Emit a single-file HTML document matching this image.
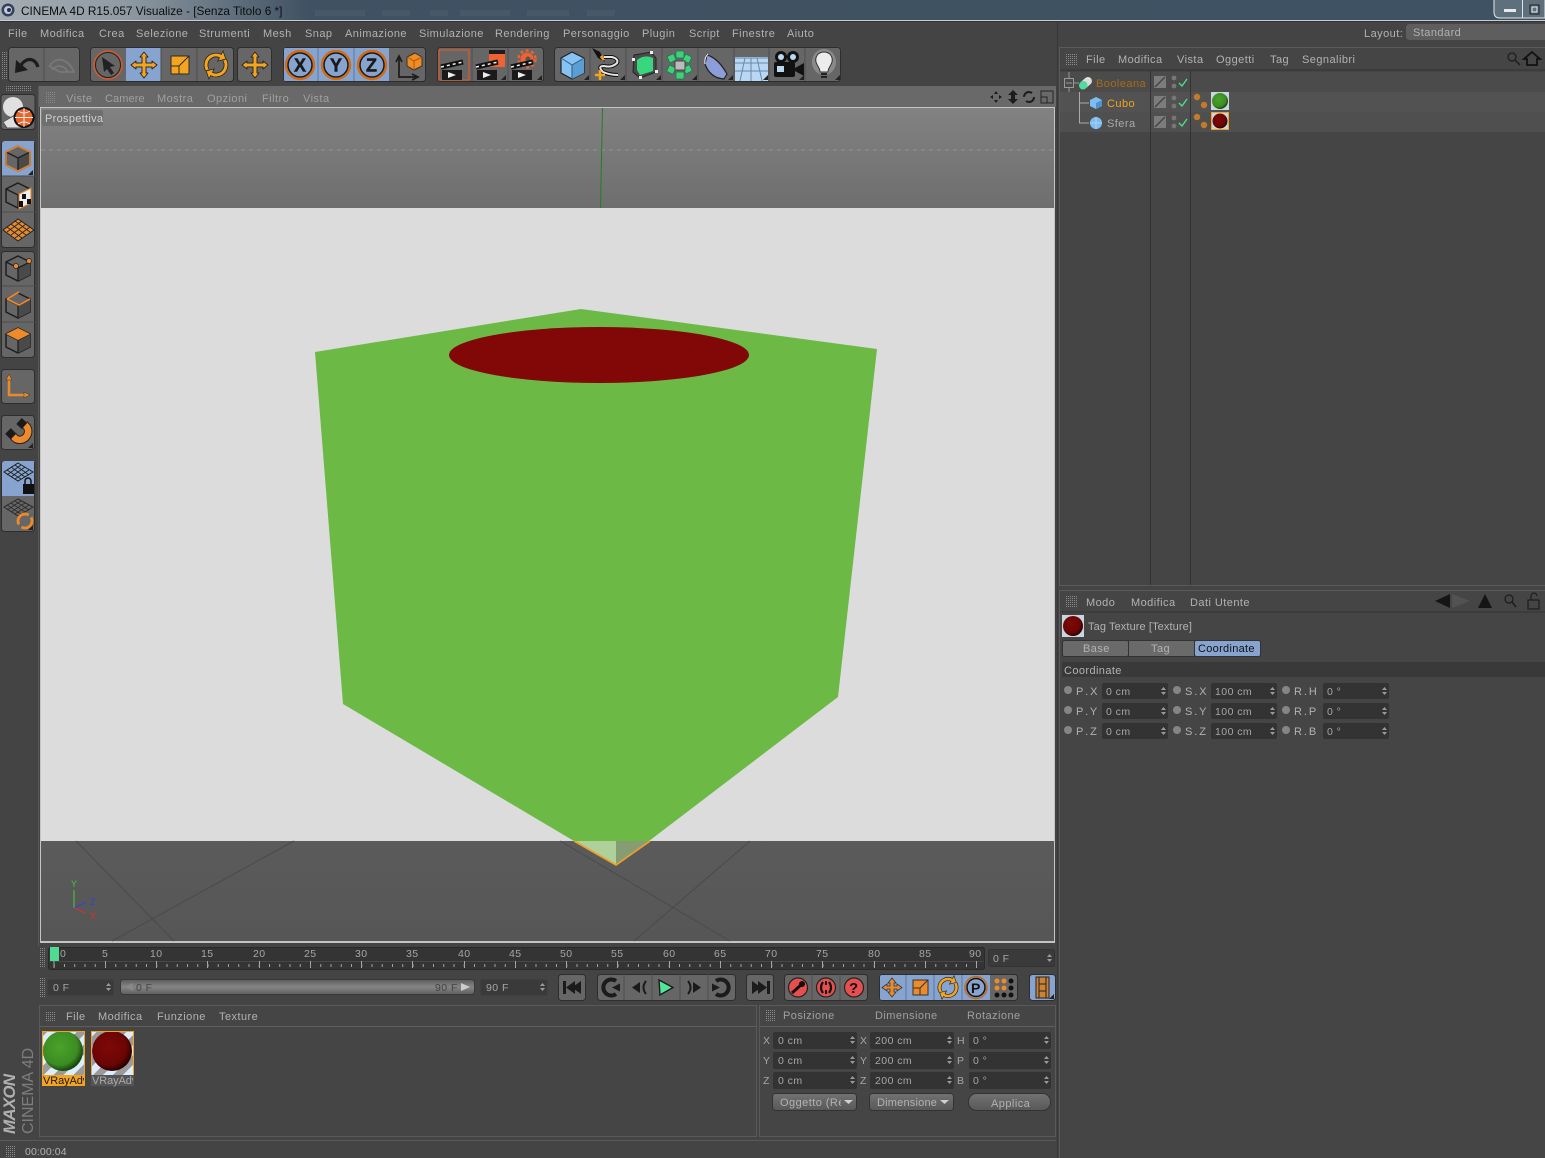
<!DOCTYPE html>
<html><head><meta charset="utf-8"><title>CINEMA 4D</title>
<style>
html,body{margin:0;padding:0;background:#444;overflow:hidden}
svg{display:block}
text{font-family:"Liberation Sans",sans-serif;font-size:11px;letter-spacing:.45px;fill:#b2b2b2}
.d{fill:#a0a0a0}
.f{fill:#a6a6a6;font-size:10.5px}
.l{word-spacing:-2px}
.btn{fill:#666;stroke:#2e2e2e}
.sep{stroke:#4d4d4d}
.ic{fill:none;stroke:#1e1e1e;stroke-width:2;stroke-linejoin:round}
.o{fill:#f5a41f;stroke:#2a2a2a;stroke-width:1;stroke-linejoin:round}
.xyz{font-size:18px;font-weight:700;fill:#1a1a1a;letter-spacing:0;stroke:#1a1a1a;stroke-width:.5px}
</style></head><body>
<svg width="1545" height="1158" viewBox="0 0 1545 1158" xmlns="http://www.w3.org/2000/svg">
<defs>
<pattern id="grip" width="2" height="2" patternUnits="userSpaceOnUse"><rect width="1" height="1" fill="#8a8a8a"/></pattern>
<linearGradient id="title" x1="0" x2="1" y1="0" y2="0"><stop offset="0" stop-color="#a5adb3"/><stop offset=".08" stop-color="#8f9aa3"/><stop offset=".2" stop-color="#3f5162"/><stop offset="1" stop-color="#3f5263"/></linearGradient>
<linearGradient id="top" x1="0" x2="0" y1="0" y2="1"><stop offset="0" stop-color="#828282"/><stop offset="1" stop-color="#6e6e6e"/></linearGradient>
<linearGradient id="bot" x1="0" x2="0" y1="0" y2="1"><stop offset="0" stop-color="#5b5b5b"/><stop offset="1" stop-color="#565656"/></linearGradient>
<linearGradient id="sl" x1="0" x2="0" y1="0" y2="1"><stop offset="0" stop-color="#5c5c5c"/><stop offset=".5" stop-color="#858585"/><stop offset="1" stop-color="#5e5e5e"/></linearGradient>
<linearGradient id="bt" x1="0" x2="0" y1="0" y2="1"><stop offset="0" stop-color="#727272"/><stop offset="1" stop-color="#585858"/></linearGradient>
<radialGradient id="gs" cx=".42" cy=".4" r=".62"><stop offset="0" stop-color="#4aa32b"/><stop offset=".72" stop-color="#3c8c22"/><stop offset="1" stop-color="#123d0a"/></radialGradient>
<radialGradient id="rs" cx=".42" cy=".4" r=".62"><stop offset="0" stop-color="#7f0808"/><stop offset=".72" stop-color="#6b0505"/><stop offset="1" stop-color="#220000"/></radialGradient>
<pattern id="mat" width="14" height="14" patternUnits="userSpaceOnUse" patternTransform="rotate(45)"><rect width="14" height="14" fill="#dcecf8"/><rect width="7" height="14" fill="#9a9a9a"/></pattern>
<symbol id="spin" width="6" height="10" overflow="visible"><path d="M0 4 L2.5 1 L5 4Z M0 6 L2.5 9 L5 6Z" fill="#9a9a9a"/></symbol>
<symbol id="move" width="34" height="34" overflow="visible"><path d="M17 4 L21 9 H19 V15 H25 V13 L30 17 L25 21 V19 H19 V25 H21 L17 30 L13 25 H15 V19 H9 V21 L4 17 L9 13 V15 H15 V9 H13Z" class="o"/></symbol>
<symbol id="cube" width="34" height="34" overflow="visible"><path d="M17 5 L29 11 V24 L17 30 L5 24 V11Z" fill="#666" stroke="#1f1f1f" stroke-width="1.5"/><path d="M17 17 L29 11 V24 L17 30Z" fill="#4a4a4a"/><path d="M5 11 L17 17 L29 11 M17 17 V30" fill="none" stroke="#1f1f1f" stroke-width="1.3"/></symbol>
<symbol id="corner" width="6" height="6"><path d="M5 0 V5 H0Z" fill="#222"/></symbol>
<symbol id="axis" width="34" height="34" overflow="visible"><circle cx="17" cy="17" r="14" fill="none" stroke="#d46b16" stroke-width="2.4"/><circle cx="17" cy="17" r="12" fill="none" stroke="#1a1a1a" stroke-width="1.5"/></symbol>
<symbol id="tagdots" width="16" height="16" overflow="visible"><circle cx="4" cy="4" r="3.2" fill="#c47a2a"/><circle cx="11" cy="12" r="3.2" fill="#c47a2a"/></symbol>
<symbol id="vis" width="40" height="20" overflow="visible"><rect x="0" y="3" width="12" height="12" fill="#7c7c7c"/><path d="M1 14 L11 4" stroke="#444" stroke-width="1.4"/><circle cx="20" cy="5" r="2.4" fill="#777"/><circle cx="20" cy="13" r="2.4" fill="#777"/><path d="M25 10 L28 13 L33 6" fill="none" stroke="#4fe08e" stroke-width="1.3"/></symbol>
<g id="rot"><circle r="10" fill="none" stroke="#222" stroke-width="4.6" stroke-dasharray="26 5.4" transform="rotate(-30)"/><path d="M2.500 -4.500 L7 -13 L9.300 -6.200Z M-2.500 4.500 L-7 13 L-9.300 6.200Z" fill="#222" stroke="#222" stroke-width="1.500"/><circle r="10" fill="none" stroke="#f5a41f" stroke-width="3" stroke-dasharray="26 5.4" transform="rotate(-30)"/><path d="M2.500 -4.500 L7 -13 L9.300 -6.200Z M-2.500 4.500 L-7 13 L-9.300 6.200Z" fill="#f5a41f"/></g>
</defs>

<rect width="1545" height="1158" fill="#444"/>

<!-- title -->
<rect width="1545" height="20" fill="url(#title)"/>
<rect y="20" width="1545" height="1" fill="#c9ced2"/>
<rect x="0" y="21" width="1545" height="1" fill="#333"/>
<g fill="#475969"><rect x="315" y="10" width="50" height="6"/><rect x="382" y="10" width="28" height="6"/><rect x="430" y="10" width="18" height="6"/><rect x="460" y="10" width="50" height="6"/><rect x="527" y="10" width="42" height="6"/><rect x="587" y="10" width="28" height="6"/></g>
<circle cx="8" cy="10" r="6.5" fill="#33405e"/><circle cx="8" cy="10" r="4" fill="#c2c9d8"/><circle cx="9" cy="10" r="2" fill="#27304a"/>
<text x="21" y="15" style="font-size:11.8px;letter-spacing:0;fill:#0d0d0d">CINEMA 4D R15.057 Visualize - [Senza Titolo 6 *]</text>
<path d="M1494 0 V12 Q1494 18 1500 18 H1545 V0" fill="#5f707d" stroke="#e2e6ea"/>
<rect x="1522" y="0" width="1" height="18" fill="#dfe4e8"/>
<rect x="1504" y="9" width="12" height="3" fill="#e6e9ec"/>
<rect x="1530" y="5" width="9" height="9" fill="none" stroke="#222"/><rect x="1532" y="7" width="5" height="5" fill="none" stroke="#e6e9ec"/>

<!-- menu -->
<text x="8" y="37">File</text><text x="40" y="37">Modifica</text><text x="99" y="37">Crea</text><text x="136" y="37">Selezione</text><text x="199" y="37">Strumenti</text><text x="263" y="37">Mesh</text><text x="305" y="37">Snap</text><text x="345" y="37">Animazione</text><text x="419" y="37">Simulazione</text><text x="495" y="37">Rendering</text><text x="563" y="37">Personaggio</text><text x="642" y="37">Plugin</text><text x="689" y="37">Script</text><text x="732" y="37">Finestre</text><text x="787" y="37">Aiuto</text>
<text x="1364" y="37">Layout:</text>
<path d="M1545 24 H1410 Q1406 24 1406 28 V36 Q1406 40 1410 40 H1545Z" fill="#5e5e5e"/>
<text x="1413" y="36">Standard</text>

<!-- top toolbar -->
<rect x="2" y="52" width="5" height="28" fill="url(#grip)"/>
<rect x="8.500" y="47.500" width="71" height="34" rx="3" class="btn"/><path d="M44 48 V81" class="sep"/>
<path d="M15 73 L16 60 L28 70Z" fill="#1c1c1c"/><path d="M20 67 C25 57 35 57 38 67" fill="none" stroke="#1c1c1c" stroke-width="3.200"/>
<path d="M50 66 C55 56 68 58 74 72 L60 72 L49 66 M52 70 C57 64 64 65 68 72" fill="none" stroke="#7b7b7b" stroke-width="1.5"/>

<rect x="90.500" y="47.500" width="143" height="34" rx="3" class="btn"/>
<rect x="126" y="48" width="35" height="33" fill="#86a4cf"/>
<path d="M161 48 V81 M197 48 V81" class="sep"/>
<circle cx="108" cy="65" r="14" fill="none" stroke="#d8582a" stroke-width="1.5"/><circle cx="108" cy="65" r="12.5" fill="none" stroke="#222" stroke-width="1"/>
<path d="M102 57 L115 66 L110 67 L114 73 L111 75 L107 69 L104 72Z" fill="#222"/>
<use href="#move" x="127" y="48"/>
<rect x="171" y="56" width="18" height="18" class="o"/><path d="M171 66 H179 V74 M179 66 L189 56" fill="none" stroke="#2a2a2a"/>
<use href="#rot" x="216" y="65"/>
<rect x="237.500" y="47.500" width="34" height="34" rx="3" class="btn"/><use href="#move" x="238" y="48"/>

<rect x="283.500" y="47.500" width="142" height="34" rx="3" class="btn"/>
<path d="M285 48 H389 V81 H285 Q284 81 284 79 V50 Q284 48 285 48Z" fill="#86a4cf"/>
<path d="M318 48 V81 M354 48 V81" stroke="#5f7896"/>
<use href="#axis" x="283" y="48"/><use href="#axis" x="319" y="48"/><use href="#axis" x="355" y="48"/>
<text x="294" y="71.500" class="xyz">X</text><text x="330" y="71.500" class="xyz">Y</text><text x="366" y="71.500" class="xyz">Z</text>
<path d="M399 58 V77 H416 M396 62 L399 56 L402 62 M412 74 L418 77 L412 80" fill="none" stroke="#1c1c1c" stroke-width="1.7"/>
<path d="M407 57 L415 53 L422 57 V66 L414 70 L407 66Z" fill="#f08c20" stroke="#333"/><path d="M407 57 L414 61 L422 57 M414 61 V70" fill="none" stroke="#a85a10"/>

<!-- render -->
<rect x="437.500" y="47.500" width="106" height="34" rx="3" class="btn"/><path d="M472 48 V81 M508 48 V81" class="sep"/>
<rect x="439" y="50" width="30" height="30" fill="none" stroke="#d75a2a" stroke-width="1.2"/>
<rect x="489" y="50" width="16" height="17" rx="1" fill="#ef6232"/><rect x="489" y="50" width="16" height="4" fill="#1d1d1d"/>
<circle cx="527" cy="59" r="6.500" fill="#ef6232"/><circle cx="527" cy="59" r="8.500" fill="none" stroke="#ef6232" stroke-width="2.500" stroke-dasharray="3 2.500"/><circle cx="528" cy="59" r="2.500" fill="#555"/>
<g id="c1"><path d="M441 67 L463 62" stroke="#111" stroke-width="5"/><path d="M441 67 L463 62" stroke="#eee" stroke-width="1.500" stroke-dasharray="3 3"/><rect x="442" y="70" width="20" height="10" fill="#1a1a1a"/><path d="M448 72 L456 75 L448 78Z" fill="#eee"/></g>
<use href="#c1" x="35"/><use href="#c1" x="70"/>
<use href="#corner" x="501" y="75"/><use href="#corner" x="537" y="75"/>

<!-- create icons -->
<rect x="554.500" y="47.500" width="286" height="34" rx="3" class="btn"/>
<path d="M590 48 V81 M626 48 V81 M662 48 V81 M698 48 V81 M734 48 V81 M769 48 V81 M805 48 V81" class="sep"/>
<path d="M572 52 L584 58 V73 L572 79 L561 73 V58Z" fill="#87c2f3" stroke="#222" stroke-width="1.2"/><path d="M572 65 L584 58 V73 L572 79Z" fill="#5b9ed3"/><path d="M561 58 L572 65 L584 58 M572 65 V79" fill="none" stroke="#2f5f86"/>
<path d="M592 48 L600 52 L605 62 L598 58Z" fill="#111"/><path d="M601 56 L604 60" stroke="#f39a1f" stroke-width="3"/>
<path d="M604 57 H612 Q619 59 617 63 Q612 68 604 66 Q597 66 603 72 Q610 75 618 75" fill="none" stroke="#111" stroke-width="4"/><path d="M604 57 H612 Q619 59 617 63 Q612 68 604 66 Q597 66 603 72 Q610 75 618 75" fill="none" stroke="#e5e5e5" stroke-width="2"/>
<path d="M600 70 V80 M595 75 H605" stroke="#f5a41f" stroke-width="2.500"/>
<path d="M634 55 L651 52 L656 58 V72 L640 78 L633 72Z" fill="#4a4a4a" stroke="#222"/><path d="M637 60 Q645 54 653 58 L653 71 L640 75 L637 70Z" fill="#38d67f"/><g fill="#eee"><rect x="650" y="51" width="3" height="3"/><rect x="655" y="70" width="3" height="3"/><rect x="639" y="76" width="3" height="3"/><rect x="632" y="58" width="3" height="3"/></g>
<g fill="#43cf76" stroke="#175" stroke-width=".7"><rect x="676" y="51" width="8" height="7" rx="1"/><rect x="684" y="55" width="7" height="7" rx="1" transform="rotate(25 687 58)"/><rect x="684" y="66" width="7" height="7" rx="1" transform="rotate(-25 687 69)"/><rect x="676" y="72" width="8" height="7" rx="1"/><rect x="668" y="66" width="7" height="7" rx="1" transform="rotate(25 671 69)"/><rect x="668" y="55" width="7" height="7" rx="1" transform="rotate(-25 671 58)"/></g><rect x="675" y="61" width="10" height="9" fill="#bbb" stroke="#444"/>
<path d="M707 55 Q718 58 727 74 L724 79 Q710 78 705 64 Z" fill="#8c9ed8" stroke="#222" stroke-width="1.2"/><path d="M708 54 Q704 58 705 64" fill="none" stroke="#eef"/>
<rect x="735" y="57" width="33" height="24" fill="#b9d7f4"/><path d="M735 58 H768 M735 63 H768 M735 71 H768 M745 58 L740 81 M751 58 V81 M757 58 L762 81" stroke="#668aa9"/>
<rect x="774" y="62" width="21" height="15" rx="2" fill="#111"/><path d="M795 68 L804 63 V76 L795 71Z" fill="#111"/><circle cx="781" cy="57" r="6" fill="#111"/><circle cx="781" cy="57" r="3" fill="#bcd9f1"/><circle cx="793" cy="57" r="6" fill="#111"/><circle cx="793" cy="57" r="3" fill="#bcd9f1"/><rect x="777" y="66" width="7" height="6" fill="#bcd9f1"/>
<ellipse cx="824" cy="62" rx="12" ry="13" fill="#8a8a8a"/><path d="M824 52 C817 52 815 58 816 62 C817 66 820 68 820 72 H828 C828 68 831 66 832 62 C833 58 831 52 824 52Z" fill="#ececec" stroke="#333"/><path d="M821 74 H827 M821 77 H827" stroke="#222" stroke-width="2"/>
<use href="#corner" x="584" y="75"/><use href="#corner" x="620" y="75"/><use href="#corner" x="656" y="75"/><use href="#corner" x="692" y="75"/><use href="#corner" x="728" y="75"/><use href="#corner" x="763" y="75"/><use href="#corner" x="799" y="75"/><use href="#corner" x="835" y="75"/>

<!-- left palette -->
<rect x="6" y="86" width="26" height="5" fill="url(#grip)"/>
<rect x="38" y="86" width="1" height="860" fill="#585858"/>
<rect x="1" y="94.500" width="34" height="35" rx="3" class="btn"/>
<circle cx="13" cy="107" r="10" fill="#e0e0e0"/><path d="M3 122 L15 115 L22 128 H7Z" fill="#e0e0e0" stroke="#555"/><circle cx="24" cy="117.500" r="9.500" fill="#e7642a" stroke="#111" stroke-width="2"/><path d="M15 117.500 H33 M24 108 V127 M18 111 Q24 115 30 111 M18 124 Q24 120 30 124" stroke="#eee" fill="none"/>

<rect x="1.500" y="141.500" width="33" height="106" rx="3" class="btn"/>
<path d="M2 144 Q2 141 5 141 H34 V176 H2Z" fill="#86a4cf"/>
<path d="M2 212 H35" class="sep"/><path d="M2 176 H35" class="sep"/>
<use href="#cube" x="1" y="141"/><path d="M18 146 L30 152 V165 L18 171 L6 165 V152Z" fill="none" stroke="#e58126" stroke-width="1.600"/>
<use href="#cube" x="1" y="178"/><path d="M19 194 L31 188 V203 L19 209Z" fill="#eee" stroke="#e58126"/><path d="M22 194 H26 V199 H22Z M27 199 H31 V204 H27Z M19 201 H23 V207 H19Z" fill="#111"/>
<path d="M18 219 L34 230 L18 241 L3 230Z" fill="#e58b2f" stroke="#222"/><path d="M11 224 L26 235 M15 221 L30 232 M7 227 L22 238 M26 224 L11 235 M22 221 L7 232 M30 227 L15 238" stroke="#222" stroke-width=".8"/>

<rect x="1.500" y="251.500" width="33" height="106" rx="3" class="btn"/><path d="M2 286 H35 M2 322 H35" class="sep"/>
<use href="#cube" x="1" y="251"/><circle cx="16" cy="266" r="2.500" fill="#ef8a2b" stroke="#222" stroke-width=".7"/><circle cx="29" cy="261" r="2.500" fill="#ef8a2b" stroke="#222" stroke-width=".7"/>
<use href="#cube" x="1" y="288"/><path d="M7 299 L19 305 L30 299" fill="none" stroke="#ef8a2b" stroke-width="1.600"/><path d="M19 292 L7 299" stroke="#ef8a2b" stroke-width="1.600"/>
<use href="#cube" x="1" y="323"/><path d="M18 328 L30 334 L18 340 L6 334Z" fill="#ef8a2b"/>

<rect x="1.500" y="369.500" width="33" height="34" rx="3" class="btn"/>
<path d="M9 377 V395 H27" fill="none" stroke="#e98a2a" stroke-width="2.500"/><path d="M6 380 L9 374 L12 380Z M24 392 L30 395 L24 398Z" fill="#e98a2a" stroke="#333" stroke-width=".5"/>
<rect x="1.500" y="415.500" width="33" height="34" rx="3" class="btn"/>
<path d="M13 436 L16 439 A8.500 8.500 0 0 0 27 427 L24 424" fill="none" stroke="#222" stroke-width="8.500"/>
<path d="M13 436 L16 439 A8.500 8.500 0 0 0 27 427 L24 424" fill="none" stroke="#ef8a2b" stroke-width="6.500"/>
<path d="M8 431 L13.500 436.500" stroke="#1a1a1a" stroke-width="8"/><path d="M19 421 L24.500 426" stroke="#1a1a1a" stroke-width="8"/>
<use href="#corner" x="28" y="443"/><use href="#corner" x="28" y="170"/>
<rect x="1.500" y="461.500" width="33" height="70" rx="3" class="btn"/>
<path d="M2 464 Q2 461 5 461 H34 V496 H2Z" fill="#86a4cf"/>
<path d="M18 463 L33 472 L18 481 L4 472Z" fill="none" stroke="#1f1f1f"/><path d="M11 467 L25 477 M15 465 L29 475 M7 470 L21 479 M25 467 L11 477 M21 465 L7 475 M29 470 L15 479" stroke="#1f1f1f" stroke-width=".8"/>
<rect x="23" y="484" width="11" height="10" fill="#111"/><path d="M25 484 V481 A3 3 0 0 1 31 481 V484" fill="none" stroke="#111" stroke-width="1.500"/>
<path d="M18 499 L33 507 L18 516 L4 507Z" fill="none" stroke="#2a2a2a"/><path d="M11 503 L25 512 M15 501 L29 510 M7 505 L21 514 M25 503 L11 512 M21 501 L7 510 M29 505 L15 514" stroke="#2a2a2a" stroke-width=".8"/>
<g transform="translate(25 521) scale(.7)"><circle r="10" fill="none" stroke="#ef8a2b" stroke-width="4" stroke-dasharray="26 5.4" transform="rotate(-30)"/></g>
<use href="#corner" x="28" y="525"/>

<!-- viewport -->
<rect x="39" y="86" width="1017" height="21" fill="#696969"/>
<rect x="46" y="92" width="10" height="11" fill="url(#grip)"/>
<text class="d" x="66" y="102">Viste</text><text class="d" x="105" y="102" style="letter-spacing:.1px">Camere</text><text class="d" x="157" y="102">Mostra</text><text class="d" x="207" y="102">Opzioni</text><text class="d" x="262" y="102">Filtro</text><text class="d" x="303" y="102">Vista</text>
<g fill="#1c1c1c"><path d="M996 91 L998 94 H994Z M996 103 L998 100 H994Z M990 97 L993 95 V99Z M1002 97 L999 95 V99Z"/><path d="M1013 90 L1018 95 H1015 V99 H1018 L1013 104 L1008 99 H1011 V95 H1008Z"/></g>
<circle cx="1029" cy="97" r="5" fill="none" stroke="#1c1c1c" stroke-width="2" stroke-dasharray="11 4.700"/><rect x="1041" y="91" width="12" height="12" fill="none" stroke="#222"/><path d="M1041 97 H1047 V103" fill="none" stroke="#222"/>

<rect x="40" y="107" width="1015" height="836" fill="#c4c4c4"/>
<rect x="41" y="108" width="1013" height="100" fill="url(#top)"/>
<rect x="41" y="208" width="1013" height="633" fill="#dcdcdc"/>
<rect x="41" y="841" width="1013" height="100" fill="url(#bot)"/>
<path d="M41 150 H1054" stroke="#919191" stroke-dasharray="4 4"/>
<path d="M602.500 108 L600.500 208" stroke="#277a27"/>
<g stroke="#4a4a4a" fill="none"><path d="M76 841 L174 941"/><path d="M294 841 L112 941"/><path d="M560 841 L730 941"/><path d="M750 841 L634 941"/></g>
<path d="M315 352 L581 309 L877 349 L838 697 L649 841 L574 841 L343 704Z" fill="#6cba45"/>
<path d="M574 841 L616 865 V841Z" fill="#aed09a"/><path d="M616 841 H650 L616 865Z" fill="#869d73"/>
<path d="M574 841 L616 865 L650 841" fill="none" stroke="#ef9f28" stroke-width="1.700"/>
<ellipse cx="599" cy="355" rx="150" ry="28" fill="#820808"/>
<rect x="42" y="110" width="61" height="16" rx="2" fill="#6f6f6f"/>
<text x="45" y="122" style="fill:#d0d0d0;letter-spacing:.3px">Prospettiva</text>
<g><path d="M74 908 V890" stroke="#3fd03f"/><path d="M74 908 L86 902" stroke="#3044dd"/><path d="M74 908 L86 913" stroke="#d83030"/>
<text x="71" y="887" style="font-size:9px;letter-spacing:0;fill:#3fc93f">Y</text><text x="90" y="905" style="font-size:9px;letter-spacing:0;fill:#3044dd">Z</text><text x="90" y="919" style="font-size:9px;letter-spacing:0;fill:#d83030">X</text></g>

<!-- timeline -->
<rect x="40" y="948" width="6" height="19" fill="url(#grip)"/>
<rect x="48.500" y="947.500" width="936" height="22" rx="2" fill="#343434" stroke="#2a2a2a"/>
<path d="M49 961.500 H984" stroke="#474747"/>
<rect x="50" y="947" width="9" height="14" fill="#4fdb92"/>
<g style="font-size:11px"><text class="f" x="60" y="957">0</text><text class="f" x="102" y="957">5</text><text class="f" x="150" y="957">10</text><text class="f" x="201" y="957">15</text><text class="f" x="253" y="957">20</text><text class="f" x="304" y="957">25</text><text class="f" x="355" y="957">30</text><text class="f" x="406" y="957">35</text><text class="f" x="458" y="957">40</text><text class="f" x="509" y="957">45</text><text class="f" x="560" y="957">50</text><text class="f" x="611" y="957">55</text><text class="f" x="663" y="957">60</text><text class="f" x="714" y="957">65</text><text class="f" x="765" y="957">70</text><text class="f" x="816" y="957">75</text><text class="f" x="868" y="957">80</text><text class="f" x="919" y="957">85</text><text class="f" x="969" y="957">90</text></g>
<path d="M54 961 V968 M105.500 961 V968 M156.500 961 V968 M207.500 961 V968 M259.500 961 V968 M310.500 961 V968 M361.500 961 V968 M412.500 961 V968 M464.500 961 V968 M515.500 961 V968 M566.500 961 V968 M617.500 961 V968 M669.500 961 V968 M720.500 961 V968 M771.500 961 V968 M822.500 961 V968 M874.500 961 V968 M925.500 961 V968 M976.500 961 V968" stroke="#a8a8a8"/>
<path d="M54 965.500 H977" stroke="#a0a0a0" stroke-width="3" stroke-dasharray="1 9.250" stroke-dashoffset="-10"/>
<rect x="988.500" y="949.500" width="66" height="17" rx="2" fill="#3a3a3a" stroke="#333"/><text class="f" x="993" y="962">0 F</text><use href="#spin" x="1047" y="953"/>

<!-- range row -->
<rect x="40" y="978" width="6" height="20" fill="url(#grip)"/>
<rect x="47.500" y="979.500" width="66" height="16" rx="2" fill="#3a3a3a"/><text class="f" x="53" y="991">0 F</text><use href="#spin" x="106" y="982"/>
<rect x="120.500" y="979.500" width="354" height="15" rx="3" fill="url(#sl)" stroke="#383838"/><text x="136" y="991" style="fill:#444;font-size:10.5px">0 F</text><text x="435" y="991" style="fill:#444;font-size:10.5px">90 F</text>
<path d="M133 983 L125 987 L133 991Z" fill="#888"/><path d="M461 983 L470 987 L461 991Z" fill="#ccc"/>
<rect x="480.500" y="979.500" width="67" height="16" rx="2" fill="#3a3a3a"/><text class="f" x="486" y="991">90 F</text><use href="#spin" x="540" y="982"/>

<!-- transport -->
<rect x="558.500" y="974.500" width="27" height="26" rx="3" class="btn"/>
<path d="M563 981 H566 V994 H563Z M575 981 L566 987.500 L575 994Z M581 981 L572 987.500 L581 994Z" fill="#1b1b1b"/>
<rect x="597.500" y="974.500" width="138" height="26" rx="3" class="btn"/>
<path d="M624 974 V1000 M652 974 V1000 M680 974 V1000 M708 974 V1000" class="sep"/>
<path d="M616 981 A8 8 0 1 0 616 994" fill="none" stroke="#1b1b1b" stroke-width="4"/><path d="M612 987.500 L620 983.500 L620 991.500Z" fill="#1b1b1b"/>
<path d="M640 982 L632 987.500 L640 993Z" fill="#1b1b1b"/><path d="M646 981 Q641 987.500 646 994" fill="none" stroke="#1b1b1b" stroke-width="2"/>
<path d="M659 980 L673 987.500 L660 995Z" fill="#4fe79a" stroke="#1b1b1b" stroke-width="1.400"/>
<path d="M693 982 L701 987.500 L693 993Z" fill="#1b1b1b"/><path d="M688 981 Q693 987.500 688 994" fill="none" stroke="#1b1b1b" stroke-width="2"/>
<path d="M716 981 A8 8 0 1 1 716 994" fill="none" stroke="#1b1b1b" stroke-width="4"/><path d="M720 987.500 L712 983.500 L712 991.500Z" fill="#1b1b1b"/>
<rect x="746.500" y="974.500" width="27" height="26" rx="3" class="btn"/>
<path d="M752 981 L761 987.500 L752 994Z M758 981 L767 987.500 L758 994Z M767 981 H770 V994 H767Z" fill="#1b1b1b"/>
<rect x="784.500" y="974.500" width="83" height="26" rx="3" class="btn"/><path d="M812 974 V1000 M840 974 V1000" class="sep"/>
<circle cx="798" cy="987.500" r="9.500" fill="#e74f4f" stroke="#222" stroke-width="1.200"/><circle cx="826" cy="987.500" r="9.500" fill="#e74f4f" stroke="#222" stroke-width="1.200"/><circle cx="854" cy="987.500" r="9.500" fill="#e74f4f" stroke="#222" stroke-width="1.200"/>
<path d="M792 993 L802 984" stroke="#111" stroke-width="3"/><circle cx="802" cy="984" r="3" fill="#111"/>
<path d="M823 982 Q819 987.500 823 993 M829 982 Q833 987.500 829 993" fill="none" stroke="#111" stroke-width="2.200"/><path d="M826 981 V985 M826 990 V994" stroke="#111" stroke-width="2"/>
<text x="849" y="993" style="font-size:15px;font-weight:700;fill:#111;letter-spacing:0">?</text>
<rect x="879.500" y="974.500" width="138" height="26" rx="3" class="btn"/>
<path d="M882 975 H990 V1000 H882 Q880 1000 880 998 V977 Q880 975 882 975Z" fill="#86a4cf"/><path d="M906 975 V1000 M934 975 V1000 M962 975 V1000" stroke="#5f7896"/>
<path d="M892 978 L896 983 H894 V986 H897 V984 L902 987.500 L897 991 V989 H894 V992 H896 L892 997 L888 992 H890 V989 H887 V991 L882 987.500 L887 984 V986 H890 V983 H888Z" fill="#ed8a2a" stroke="#333" stroke-width=".8"/>
<rect x="913" y="980" width="15" height="15" fill="#ed8a2a" stroke="#333"/><path d="M913 988 H920 V995 M920 988 L928 980" fill="none" stroke="#333"/>
<use href="#rot" transform="translate(948 987.500) scale(.85)"/>
<circle cx="976" cy="987.500" r="11" fill="none" stroke="#c46a1e" stroke-width="1.500"/><circle cx="976" cy="987.500" r="9" fill="none" stroke="#111" stroke-width="1.500"/>
<text x="971" y="993" style="font-size:14px;font-weight:700;fill:#111;letter-spacing:0">P</text>
<g fill="#111"><circle cx="997" cy="981" r="2.500" fill="#ed8a2a"/><circle cx="1004" cy="981" r="2.500" fill="#ed8a2a"/><circle cx="1011" cy="981" r="2.500"/><circle cx="997" cy="988" r="2.500" fill="#ed8a2a"/><circle cx="1004" cy="988" r="2.500" fill="#ed8a2a"/><circle cx="1011" cy="988" r="2.500"/><circle cx="997" cy="995" r="2.500"/><circle cx="1004" cy="995" r="2.500"/><circle cx="1011" cy="995" r="2.500"/></g>
<rect x="1029.500" y="974.500" width="26" height="26" rx="3" fill="#86a4cf" stroke="#2e2e2e"/>
<rect x="1036" y="977" width="13" height="21" fill="#c98336" stroke="#222"/><path d="M1039 977 V998 M1046 977 V998 M1039 984 H1046 M1039 991 H1046" stroke="#222"/>
<use href="#corner" x="1049" y="994"/>

<!-- material manager -->
<rect x="39.500" y="1005.500" width="717" height="131" fill="#454545" stroke="#5a5a5a"/>
<path d="M40 1026.500 H756" stroke="#5f5f5f"/>
<rect x="46" y="1011" width="10" height="11" fill="url(#grip)"/>
<text x="66" y="1020">File</text><text x="98" y="1020">Modifica</text><text x="157" y="1020">Funzione</text><text x="219" y="1020">Texture</text>
<rect x="42" y="1031" width="43" height="44" fill="url(#mat)"/><circle cx="63" cy="1051" r="20" fill="url(#gs)"/><rect x="42.500" y="1031.500" width="42" height="44" fill="none" stroke="#f5a41f"/>
<rect x="42" y="1075" width="43" height="11" fill="#f5a41f"/>
<svg x="43" y="1075" width="41" height="12"><text x="0" y="9" style="fill:#1a1a1a;letter-spacing:-.1px">VRayAdv</text></svg>
<rect x="91" y="1031" width="43" height="44" fill="url(#mat)"/><circle cx="112" cy="1051" r="20" fill="url(#rs)"/><rect x="91.500" y="1031.500" width="42" height="44" fill="none" stroke="#f5a41f"/>
<rect x="91" y="1075" width="43" height="11" fill="#555"/>
<svg x="92" y="1075" width="41" height="12"><text x="0" y="9" style="fill:#aaa;letter-spacing:-.1px">VRayAdv</text></svg>
<g transform="translate(15 1134) rotate(-90)"><text x="0" y="0" style="font-size:17px;font-weight:700;font-style:italic;letter-spacing:-.8px;fill:#b0b0b0">MAXON</text></g>
<g transform="translate(33 1134) rotate(-90)"><text x="0" y="0" style="font-size:16px;letter-spacing:0;fill:#7d7d7d">CINEMA 4D</text></g>

<!-- coordinates -->
<rect x="759.500" y="1005.500" width="296" height="131" fill="#454545" stroke="#5a5a5a"/>
<path d="M760 1026.500 H1055" stroke="#5f5f5f"/>
<rect x="766" y="1010" width="10" height="11" fill="url(#grip)"/>
<text class="d" x="783" y="1019">Posizione</text><text class="d" x="875" y="1019">Dimensione</text><text class="d" x="967" y="1019">Rotazione</text>
<g fill="#333"><rect x="773" y="1032" width="84" height="17" rx="2"/><rect x="870" y="1032" width="84" height="17" rx="2"/><rect x="969" y="1032" width="82" height="17" rx="2"/><rect x="773" y="1052" width="84" height="17" rx="2"/><rect x="870" y="1052" width="84" height="17" rx="2"/><rect x="969" y="1052" width="82" height="17" rx="2"/><rect x="773" y="1072" width="84" height="17" rx="2"/><rect x="870" y="1072" width="84" height="17" rx="2"/><rect x="969" y="1072" width="82" height="17" rx="2"/></g>
<text class="f" x="763" y="1044">X</text><text class="f" x="778" y="1044">0 cm</text><text class="f" x="860" y="1044">X</text><text class="f" x="875" y="1044">200 cm</text><text class="f" x="957" y="1044">H</text><text class="f" x="973" y="1044">0 °</text>
<text class="f" x="763" y="1064">Y</text><text class="f" x="778" y="1064">0 cm</text><text class="f" x="860" y="1064">Y</text><text class="f" x="875" y="1064">200 cm</text><text class="f" x="957" y="1064">P</text><text class="f" x="973" y="1064">0 °</text>
<text class="f" x="763" y="1084">Z</text><text class="f" x="778" y="1084">0 cm</text><text class="f" x="860" y="1084">Z</text><text class="f" x="875" y="1084">200 cm</text><text class="f" x="957" y="1084">B</text><text class="f" x="973" y="1084">0 °</text>
<use href="#spin" x="850" y="1035"/><use href="#spin" x="947" y="1035"/><use href="#spin" x="1044" y="1035"/><use href="#spin" x="850" y="1055"/><use href="#spin" x="947" y="1055"/><use href="#spin" x="1044" y="1055"/><use href="#spin" x="850" y="1075"/><use href="#spin" x="947" y="1075"/><use href="#spin" x="1044" y="1075"/>
<rect x="772.500" y="1093.500" width="84" height="17" rx="3" fill="url(#bt)" stroke="#333"/><svg x="780" y="1094" width="61" height="16"><text x="0" y="12">Oggetto (Rel)</text></svg><path d="M844 1100 H853 L848.500 1104Z" fill="#d0d0d0"/>
<rect x="869.500" y="1093.500" width="84" height="17" rx="3" fill="url(#bt)" stroke="#333"/><text x="877" y="1106" style="letter-spacing:.2px">Dimensione</text><path d="M940 1100 H949 L944.500 1104Z" fill="#d0d0d0"/>
<rect x="968.500" y="1093.500" width="82" height="17" rx="8" fill="url(#bt)" stroke="#333"/><text x="991" y="1107">Applica</text>

<!-- status -->
<path d="M0 1140.500 H1056" stroke="#5a5a5a"/>
<rect x="5" y="1145" width="11" height="12" fill="url(#grip)"/>
<text x="25" y="1155" style="font-size:10.500px;letter-spacing:.1px">00:00:04</text>

<!-- right column -->
<rect x="1057" y="22" width="1" height="1136" fill="#383838"/>
<rect x="1059.500" y="47.500" width="486" height="538" fill="#454545" stroke="#5a5a5a"/>
<path d="M1060 70 H1545" stroke="#333"/>
<rect x="1066" y="54" width="11" height="11" fill="url(#grip)"/>
<text x="1086" y="63">File</text><text x="1118" y="63">Modifica</text><text x="1177" y="63">Vista</text><text x="1216" y="63">Oggetti</text><text x="1270" y="63">Tag</text><text x="1302" y="63">Segnalibri</text>
<circle cx="1512" cy="57" r="4" fill="none" stroke="#1c1c1c" stroke-width="1.200"/><path d="M1515 60 L1520 65" stroke="#1c1c1c" stroke-width="1.500"/>
<path d="M1532 52 L1540 59 H1537 V65 H1527 V59 H1524Z" fill="none" stroke="#111" stroke-width="1.800"/>
<rect x="1060" y="72" width="485" height="20" fill="#4b4b4b"/><rect x="1060" y="92" width="485" height="20" fill="#525252"/><rect x="1060" y="112" width="485" height="20" fill="#4f4f4f"/>
<path d="M1150.500 71 V585 M1190.500 71 V585" stroke="#333"/>
<path d="M1069 72 V78 M1069 87 V92" stroke="#999" fill="none"/><rect x="1064.500" y="78.500" width="9" height="9" fill="none" stroke="#999"/><path d="M1066 83 H1072 M1074 83 H1079" stroke="#999" fill="none"/>
<path d="M1083.500 85 L1088 81" stroke="#ddd" stroke-width="8" stroke-linecap="round"/><path d="M1083 85.500 L1083.500 85" stroke="#4fdc9e" stroke-width="8" stroke-linecap="round"/>
<text x="1096" y="87" style="fill:#a86c16">Booleana</text>
<path d="M1079.500 92 V123 H1089 M1079.500 103 H1089" stroke="#aaa" fill="none"/>
<path d="M1096 97 L1102 100 V106 L1096 109 L1090 106 V100Z" fill="#7fbdf0"/><path d="M1096 103 L1102 100 V106 L1096 109Z" fill="#4e94cc"/>
<text x="1107" y="107" style="fill:#f5a41f">Cubo</text>
<circle cx="1096" cy="123" r="6" fill="#7fbdf0"/><path d="M1090 123 H1102 M1096 117 V129" stroke="#aad4f5"/>
<text x="1107" y="127" style="fill:#aaa">Sfera</text>
<use href="#vis" x="1154" y="73"/><use href="#vis" x="1154" y="93"/><use href="#vis" x="1154" y="113"/>
<use href="#tagdots" x="1193" y="93"/><use href="#tagdots" x="1193" y="113"/>
<rect x="1211" y="92" width="18" height="18" fill="#c9d6e1"/><circle cx="1220" cy="101" r="8" fill="url(#gs)"/>
<rect x="1211.500" y="112.500" width="17" height="17" fill="#c9d6e1" stroke="#f5a41f"/><circle cx="1220" cy="121" r="7.500" fill="url(#rs)"/>

<!-- attribute manager -->
<rect x="1059.500" y="590.500" width="486" height="568" fill="#454545" stroke="#5a5a5a"/>
<path d="M1060 612 H1545" stroke="#333"/>
<rect x="1066" y="596" width="11" height="11" fill="url(#grip)"/>
<text x="1086" y="606">Modo</text><text x="1131" y="606">Modifica</text><text x="1190" y="606">Dati Utente</text>
<path d="M1435 601 L1450 594 V608Z" fill="#151515"/><path d="M1452 594 L1470 601 L1452 608Z" fill="#525252"/>
<path d="M1485 594 L1492 608 H1478Z" fill="#151515"/>
<circle cx="1509" cy="599" r="4" fill="none" stroke="#1c1c1c" stroke-width="1.200"/><path d="M1512 602 L1516 607" stroke="#1c1c1c" stroke-width="1.500"/>
<rect x="1528" y="600" width="11" height="9" fill="none" stroke="#1c1c1c" stroke-width="1.200"/><path d="M1531 600 V596 A3 3 0 0 1 1537 596" fill="none" stroke="#1c1c1c" stroke-width="1.200"/>
<rect x="1062" y="615" width="22" height="22" fill="#c9d6e1"/><circle cx="1073" cy="626" r="10" fill="url(#rs)"/>
<text x="1088" y="630" style="letter-spacing:.1px">Tag Texture [Texture]</text>
<rect x="1062.500" y="640.500" width="66" height="16" rx="2" fill="#6a6a6a" stroke="#333"/><rect x="1128.500" y="640.500" width="66" height="16" fill="#6a6a6a" stroke="#333"/><rect x="1194.500" y="640.500" width="66" height="16" rx="2" fill="#86a4cf" stroke="#333"/>
<text x="1083" y="652">Base</text><text x="1151" y="652">Tag</text><text x="1198" y="652" style="fill:#111;letter-spacing:.3px">Coordinate</text>
<rect x="1062" y="662" width="483" height="15" fill="#393939"/><text x="1064" y="674" style="letter-spacing:.4px">Coordinate</text>
<g fill="#333"><rect x="1102" y="683" width="66" height="16" rx="2"/><rect x="1211" y="683" width="66" height="16" rx="2"/><rect x="1323" y="683" width="66" height="16" rx="2"/><rect x="1102" y="703" width="66" height="16" rx="2"/><rect x="1211" y="703" width="66" height="16" rx="2"/><rect x="1323" y="703" width="66" height="16" rx="2"/><rect x="1102" y="723" width="66" height="16" rx="2"/><rect x="1211" y="723" width="66" height="16" rx="2"/><rect x="1323" y="723" width="66" height="16" rx="2"/></g>
<g fill="#858585"><circle cx="1068" cy="690" r="4"/><circle cx="1177" cy="690" r="4"/><circle cx="1286" cy="690" r="4"/><circle cx="1068" cy="710" r="4"/><circle cx="1177" cy="710" r="4"/><circle cx="1286" cy="710" r="4"/><circle cx="1068" cy="730" r="4"/><circle cx="1177" cy="730" r="4"/><circle cx="1286" cy="730" r="4"/></g>
<text class="l" x="1076" y="695">P . X</text><text class="f" x="1106" y="695">0 cm</text><text class="l" x="1185" y="695">S . X</text><text class="f" x="1215" y="695">100 cm</text><text class="l" x="1294" y="695">R . H</text><text class="f" x="1327" y="695">0 °</text>
<text class="l" x="1076" y="715">P . Y</text><text class="f" x="1106" y="715">0 cm</text><text class="l" x="1185" y="715">S . Y</text><text class="f" x="1215" y="715">100 cm</text><text class="l" x="1294" y="715">R . P</text><text class="f" x="1327" y="715">0 °</text>
<text class="l" x="1076" y="735">P . Z</text><text class="f" x="1106" y="735">0 cm</text><text class="l" x="1185" y="735">S . Z</text><text class="f" x="1215" y="735">100 cm</text><text class="l" x="1294" y="735">R . B</text><text class="f" x="1327" y="735">0 °</text>
<use href="#spin" x="1161" y="686"/><use href="#spin" x="1270" y="686"/><use href="#spin" x="1382" y="686"/><use href="#spin" x="1161" y="706"/><use href="#spin" x="1270" y="706"/><use href="#spin" x="1382" y="706"/><use href="#spin" x="1161" y="726"/><use href="#spin" x="1270" y="726"/><use href="#spin" x="1382" y="726"/>
</svg>
</body></html>
